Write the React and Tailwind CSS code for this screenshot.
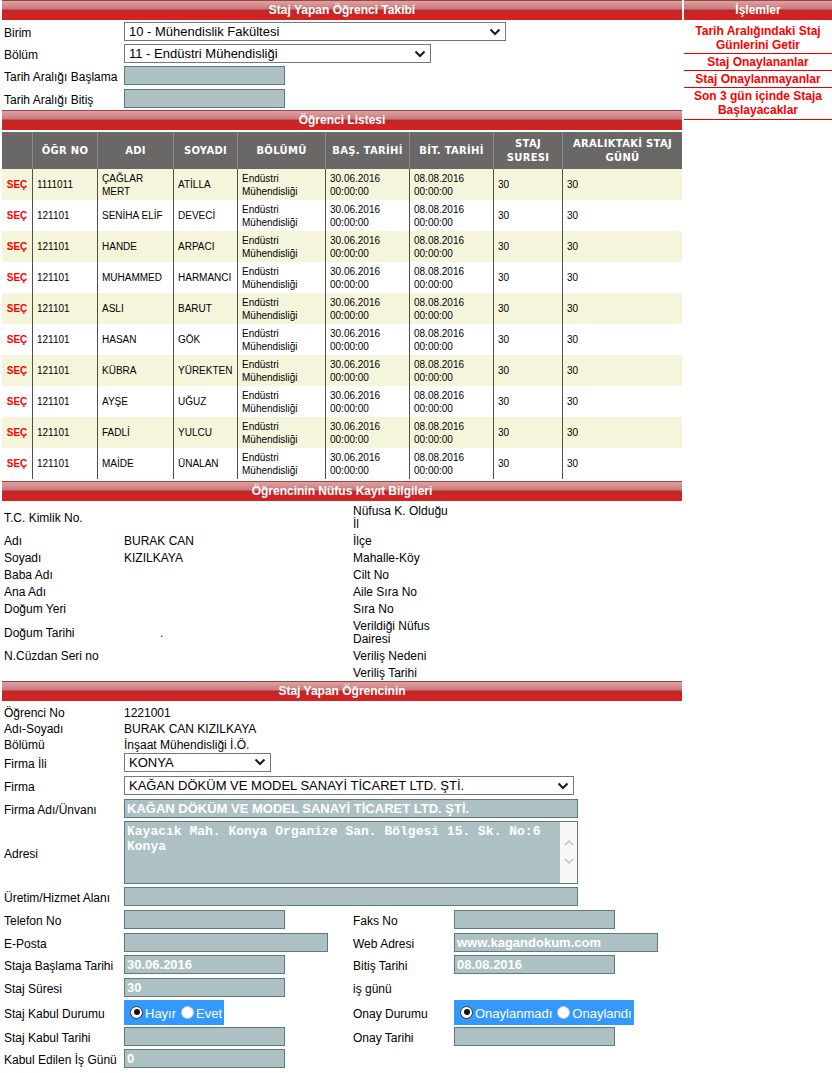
import React from "react";

const COLS = "grid grid-cols-[120px_229px_101px_230px] items-center";

const students = [
  ["1111011", ["ÇAĞLAR", "MERT"], "ATİLLA"],
  ["121101", ["SENİHA ELİF"], "DEVECİ"],
  ["121101", ["HANDE"], "ARPACI"],
  ["121101", ["MUHAMMED"], "HARMANCI"],
  ["121101", ["ASLI"], "BARUT"],
  ["121101", ["HASAN"], "GÖK"],
  ["121101", ["KÜBRA"], "YÜREKTEN"],
  ["121101", ["AYŞE"], "UĞUZ"],
  ["121101", ["FADLİ"], "YULCU"],
  ["121101", ["MAİDE"], "ÜNALAN"],
];

const nufus = [
  ["T.C. Kimlik No.", "", "Nüfusa K. Olduğu İl"],
  ["Adı", "BURAK CAN", "İlçe"],
  ["Soyadı", "KIZILKAYA", "Mahalle-Köy"],
  ["Baba Adı", "", "Cilt No"],
  ["Ana Adı", "", "Aile Sıra No"],
  ["Doğum Yeri", "", "Sıra No"],
  ["Doğum Tarihi", "dot", "Verildiği Nüfus Dairesi"],
  ["N.Cüzdan Seri no", "", "Veriliş Nedeni"],
  ["", "", "Veriliş Tarihi"],
];

function Bar({ children }) {
  return (
    <div className="h-[20px] border-t border-[#9a4444] bg-[linear-gradient(to_bottom,#dda2a2_0%,#cc7b7b_40%,#b62a2a_50%,#cd2525_68%,#d62121_100%)] text-center text-[12px] font-bold leading-[19px] text-white">
      {children}
    </div>
  );
}

function Chevron() {
  return (
    <svg width="12" height="8" viewBox="0 0 12 8" className="shrink-0">
      <path d="M1.5 1.5 L6 6 L10.5 1.5" fill="none" stroke="#1a1a1a" strokeWidth="2" />
    </svg>
  );
}

function Select({ className, children }) {
  return (
    <div
      className={
        "flex h-[19px] items-center justify-between border border-[#777] bg-white pl-[4px] pr-[4px] text-[13px] leading-[17px] text-black " +
        className
      }
    >
      <span className="whitespace-nowrap">{children}</span>
      <Chevron />
    </div>
  );
}

function Field({ className, children }) {
  return (
    <div
      className={
        "h-[19px] overflow-hidden whitespace-nowrap border border-[#5e7a7b] bg-[#adc1c4] pl-[2px] text-[13px] font-bold leading-[18px] text-white " +
        className
      }
    >
      {children}
    </div>
  );
}

function Radio({ on }) {
  return on ? (
    <span className="flex h-[13px] w-[13px] shrink-0 items-center justify-center rounded-full border border-[#333] bg-white">
      <span className="block h-[6px] w-[6px] rounded-full bg-[#111]" />
    </span>
  ) : (
    <span className="block h-[13px] w-[13px] shrink-0 rounded-full border border-[#c4c4c4] bg-white" />
  );
}

function RadioBox({ a, b }) {
  return (
    <div className="inline-flex h-[25px] items-center whitespace-nowrap bg-[#3399ff] pl-[6px] pr-[2px] align-top text-[13px] text-white">
      <Radio on />
      <span className="ml-[2px] mt-[3px]">{a}</span>
      <span className="ml-[5px]">
        <Radio />
      </span>
      <span className="ml-[2px] mt-[3px]">{b}</span>
    </div>
  );
}

function Label({ children, nowrap }) {
  return <div className={"pl-[2px] pt-[3px] " + (nowrap ? "whitespace-nowrap" : "")}>{children}</div>;
}

function TopForm() {
  return (
    <div>
      <div className="flex h-[23px] items-center">
        <div className="w-[122px] pl-[2px] pt-[2px]">Birim</div>
        <Select className="w-[382px]">10 - Mühendislik Fakültesi</Select>
      </div>
      <div className="flex h-[21px] items-center">
        <div className="w-[122px] pl-[2px] pt-[2px]">Bölüm</div>
        <Select className="w-[307px]">11 - Endüstri Mühendisliği</Select>
      </div>
      <div className="flex h-[23px] items-center">
        <div className="w-[122px] pl-[2px] pt-[2px]">Tarih Aralığı Başlama</div>
        <Field className="w-[161px]" />
      </div>
      <div className="flex h-[23px] items-center">
        <div className="w-[122px] pl-[2px] pt-[2px]">Tarih Aralığı Bitiş</div>
        <Field className="w-[161px]" />
      </div>
    </div>
  );
}

function StudentTable() {
  const head = "flex items-center justify-center border-l border-[#8c8989] text-center";
  const cell = "flex items-center border-l border-[#4f4f4f] pl-[4px]";
  return (
    <div className="mt-[2px] text-[10px] leading-[13px]">
      <div className="grid h-[37px] grid-cols-[30px_65px_76px_64px_88px_84px_84px_69px_120px] bg-[#6a6767] font-['DejaVu_Sans',sans-serif] text-[10px] font-bold leading-[14px] tracking-[0.3px] text-white">
        <div />
        <div className={head}>ÖĞR NO</div>
        <div className={head}>ADI</div>
        <div className={head}>SOYADI</div>
        <div className={head}>BÖLÜMÜ</div>
        <div className={head}>BAŞ. TARİHİ</div>
        <div className={head}>BİT. TARİHİ</div>
        <div className={head}>
          STAJ
          <br />
          SURESI
        </div>
        <div className={head}>
          ARALIKTAKİ STAJ
          <br />
          GÜNÜ
        </div>
      </div>
      {students.map((s, i) => (
        <div
          key={i}
          className={
            "grid h-[31px] grid-cols-[30px_65px_76px_64px_88px_84px_84px_69px_120px] text-black " +
            (i % 2 === 0 ? "bg-[#f5f5dc]" : "bg-white")
          }
        >
          <div className="flex items-center justify-center font-bold text-[#f00]">SEÇ</div>
          <div className={cell}>{s[0]}</div>
          <div className={cell}>
            <div>
              {s[1].map((t, j) => (
                <div key={j}>{t}</div>
              ))}
            </div>
          </div>
          <div className={cell}>{s[2]}</div>
          <div className={cell}>
            <div>
              Endüstri
              <br />
              Mühendisliği
            </div>
          </div>
          <div className={cell}>
            <div>
              30.06.2016
              <br />
              00:00:00
            </div>
          </div>
          <div className={cell}>
            <div>
              08.08.2016
              <br />
              00:00:00
            </div>
          </div>
          <div className={cell}>30</div>
          <div className={cell}>30</div>
        </div>
      ))}
    </div>
  );
}

function NufusSection() {
  return (
    <div className="mt-[1px] leading-[13px]">
      {nufus.map((r, i) => (
        <div key={i} className={COLS + " pb-[1px] pt-[3px]"}>
          <div className="pl-[2px]">{r[0]}</div>
          <div className="pl-[2px]">
            {r[1] === "dot" ? <span className="ml-[36px]">.</span> : r[1]}
          </div>
          <div className="pl-[2px]">{r[2]}</div>
          <div />
        </div>
      ))}
    </div>
  );
}

function Textarea() {
  return (
    <div className="flex h-[63px] w-[454px] border border-[#5e7a7b] bg-[#adc1c4]">
      <div className="flex-1 pl-[2px] pt-[2px] font-['Liberation_Mono',monospace] text-[13px] font-bold leading-[15px] text-white">
        Kayacık Mah. Konya Organize San. Bölgesi 15. Sk. No:6
        <br />
        Konya
      </div>
      <div className="flex w-[17px] flex-col items-center justify-center gap-[12px] bg-[#f7f7f7]">
        <svg width="10" height="6" viewBox="0 0 10 6">
          <path d="M1 5 L5 1 L9 5" fill="none" stroke="#c2c2c2" strokeWidth="1.5" />
        </svg>
        <svg width="10" height="6" viewBox="0 0 10 6">
          <path d="M1 1 L5 5 L9 1" fill="none" stroke="#c2c2c2" strokeWidth="1.5" />
        </svg>
      </div>
    </div>
  );
}

function StajSection() {
  return (
    <div className="mt-[1px]">
      <div className={COLS + " h-[16px]"}>
        <div className="pl-[2px] pt-[2px]">Öğrenci No</div>
        <div className="pl-[2px] pt-[2px]">1221001</div>
      </div>
      <div className={COLS + " h-[16px]"}>
        <div className="pl-[2px] pt-[2px]">Adı-Soyadı</div>
        <div className="pl-[2px] pt-[2px]">BURAK CAN KIZILKAYA</div>
      </div>
      <div className={COLS + " h-[16px]"}>
        <div className="pl-[2px] pt-[2px]">Bölümü</div>
        <div className="whitespace-nowrap pl-[2px] pt-[2px]">İnşaat Mühendisliği İ.Ö.</div>
      </div>
      <div className={COLS + " h-[24px]"}>
        <Label>Firma İli</Label>
        <div className="pl-[2px]">
          <Select className="w-[147px]">KONYA</Select>
        </div>
      </div>
      <div className={COLS + " h-[23px]"}>
        <Label>Firma</Label>
        <div className="col-span-3 pl-[2px]">
          <Select className="w-[450px]">KAĞAN DÖKÜM VE MODEL SANAYİ TİCARET LTD. ŞTİ.</Select>
        </div>
      </div>
      <div className={COLS + " h-[22px]"}>
        <Label>Firma Adı/Ünvanı</Label>
        <div className="col-span-3 pl-[2px]">
          <Field className="w-[454px]">KAĞAN DÖKÜM VE MODEL SANAYİ TİCARET LTD. ŞTİ.</Field>
        </div>
      </div>
      <div className={COLS + " h-[66px]"}>
        <Label>Adresi</Label>
        <div className="col-span-3 pl-[2px]">
          <Textarea />
        </div>
      </div>
      <div className={COLS + " h-[23px]"}>
        <Label nowrap>Üretim/Hizmet Alanı</Label>
        <div className="col-span-3 pl-[2px]">
          <Field className="w-[454px]" />
        </div>
      </div>
      <div className={COLS + " h-[23px]"}>
        <Label>Telefon No</Label>
        <div className="pl-[2px]">
          <Field className="w-[161px]" />
        </div>
        <Label>Faks No</Label>
        <div className="pl-[2px]">
          <Field className="w-[161px]" />
        </div>
      </div>
      <div className={COLS + " h-[22px]"}>
        <Label>E-Posta</Label>
        <div className="pl-[2px]">
          <Field className="w-[204px]" />
        </div>
        <Label>Web Adresi</Label>
        <div className="pl-[2px]">
          <Field className="w-[204px]">www.kagandokum.com</Field>
        </div>
      </div>
      <div className={COLS + " h-[23px]"}>
        <Label nowrap>Staja Başlama Tarihi</Label>
        <div className="pl-[2px]">
          <Field className="w-[161px]">30.06.2016</Field>
        </div>
        <Label>Bitiş Tarihi</Label>
        <div className="pl-[2px]">
          <Field className="w-[161px]">08.08.2016</Field>
        </div>
      </div>
      <div className={COLS + " h-[22px]"}>
        <Label>Staj Süresi</Label>
        <div className="pl-[2px]">
          <Field className="w-[161px]">30</Field>
        </div>
        <Label>iş günü</Label>
        <div />
      </div>
      <div className={COLS + " h-[28px]"}>
        <Label>Staj Kabul Durumu</Label>
        <div className="pl-[2px]">
          <RadioBox a="Hayır" b="Evet" />
        </div>
        <Label>Onay Durumu</Label>
        <div className="pl-[2px]">
          <RadioBox a="Onaylanmadı" b="Onaylandı" />
        </div>
      </div>
      <div className={COLS + " h-[21px]"}>
        <Label>Staj Kabul Tarihi</Label>
        <div className="pl-[2px]">
          <Field className="w-[161px]" />
        </div>
        <Label>Onay Tarihi</Label>
        <div className="pl-[2px]">
          <Field className="w-[161px]" />
        </div>
      </div>
      <div className={COLS + " h-[23px]"}>
        <Label nowrap>Kabul Edilen İş Günü</Label>
        <div className="pl-[2px]">
          <Field className="w-[161px]">0</Field>
        </div>
      </div>
    </div>
  );
}

function SidePanel() {
  const link = "border-b border-[#e60000] py-[1px] text-center text-[12px] font-bold leading-[14px] text-[#f00]";
  return (
    <div className="w-[148px]">
      <Bar>İşlemler</Bar>
      <div className="mt-[2px]">
        <div className={link + " pt-[2px]"}>
          Tarih Aralığındaki Staj
          <br />
          Günlerini Getir
        </div>
        <div className={link}>Staj Onaylananlar</div>
        <div className={link}>Staj Onaylanmayanlar</div>
        <div className={link + " pb-[2px]"}>
          Son 3 gün içinde Staja
          <br />
          Başlayacaklar
        </div>
      </div>
    </div>
  );
}

export default function App() {
  return (
    <div className="flex min-h-[1073px] gap-[2px] bg-white pl-[2px] font-['Liberation_Sans',Arial,sans-serif] text-[12px] text-black">
      <div className="w-[680px]">
        <Bar>Staj Yapan Öğrenci Takibi</Bar>
        <TopForm />
        <Bar>Öğrenci Listesi</Bar>
        <StudentTable />
        <div className="mt-[2px]">
          <Bar>Öğrencinin Nüfus Kayıt Bilgileri</Bar>
        </div>
        <NufusSection />
        <Bar>Staj Yapan Öğrencinin</Bar>
        <StajSection />
      </div>
      <SidePanel />
    </div>
  );
}
